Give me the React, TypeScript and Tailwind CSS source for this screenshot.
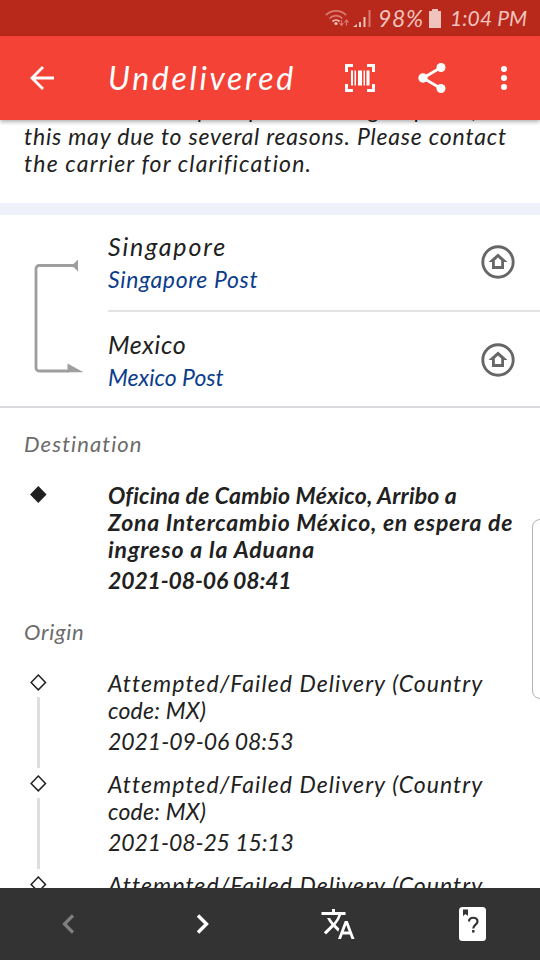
import type { ReactNode } from 'react';

interface Stop {
  country: string;
  carrier: string;
  countryClass: string;
  carrierClass: string;
}

interface TrackEvent {
  date: string;
  dateClass: string;
}

const stops: Stop[] = [
  { country: 'Singapore', carrier: 'Singapore Post', countryClass: 'tracking-[1.85px]', carrierClass: 'tracking-[0.65px]' },
  { country: 'Mexico', carrier: 'Mexico Post', countryClass: 'tracking-[0.6px]', carrierClass: 'tracking-[0px]' },
];

const originEvents: TrackEvent[] = [
  { date: '2021-09-06 08:53', dateClass: 'tracking-[-0.05px]' },
  { date: '2021-08-25 15:13', dateClass: 'tracking-[-0.1px]' },
  { date: '2021-08-18 11:42', dateClass: 'tracking-[-0.05px]' },
];

function StatusBar() {
  return (
    <div className="flex h-9 items-center bg-[#b8291b] text-[#f1c3bf]">
      <svg className="ml-[325px] h-7 w-12 shrink-0" viewBox="0 0 48 28" fill="none">
        <g stroke="#d9796f" strokeWidth="1.8">
          <path d="M1 11a14 14 0 0 1 20 0" />
          <path d="M4.5 14.5a9 9 0 0 1 13 0" />
        </g>
        <path d="M7.5 17.5a5 5 0 0 1 7 0" stroke="#f1c3bf" strokeWidth="1.8" />
        <circle cx="11" cy="19.5" r="1.6" fill="#f1c3bf" />
        <path d="M16.5 16v5M14.5 19l2 2.5 2-2.5M21.5 21.5v-5M19.5 18.5l2-2.5 2 2.5" stroke="#d9796f" strokeWidth="1.2" />
        <path d="M28 23l4-3v3zM34 18h2v5h-2zM38.5 13h2v10h-2z" fill="#f1c3bf" />
        <path d="M43.5 6h2v17h-2z" fill="#d9796f" />
      </svg>
      <span className="ml-[5px] w-[51px] whitespace-nowrap text-[23px] tracking-[0.6px]">98%</span>
      <svg className="h-[19px] w-3 shrink-0" viewBox="0 0 12 19" fill="currentColor">
        <path d="M3 0h6v2h3v17H0V2h3z" />
      </svg>
      <span className="ml-[9px] whitespace-nowrap text-[21px] tracking-[0.1px]">1:04 PM</span>
    </div>
  );
}

function AppBar() {
  return (
    <header className="relative z-10 flex h-21 items-center bg-[#f44336] text-white shadow-[0_2px_4px_rgba(0,0,0,0.3)]">
      <svg className="ml-[30px] h-6 w-6 shrink-0" viewBox="0 0 24 24" fill="none" stroke="currentColor" strokeWidth="2.8">
        <path d="M24 12H2M13 1L2 12l11 11" />
      </svg>
      <h1 className="ml-[54px] w-[237px] whitespace-nowrap text-[32px] tracking-[2.7px]">Undelivered</h1>
      <svg className="h-7 w-[30px] shrink-0" viewBox="0 0 30 28" fill="currentColor">
        <path d="M0 0h8v3H3v5H0zM22 0h8v8h-3V3h-5zM0 20h3v5h5v3H0zM27 20h3v8h-8v-3h5z" />
        <path d="M6 6.500h2v15H6zM9.500 6.500h1.500v15H9.500zM13 6.500h4v15h-4zM18.500 6.500h1.500v15h-1.500zM21.500 6.500h3v15h-3z" />
      </svg>
      <svg className="ml-[43px] h-[30px] w-7 shrink-0" viewBox="0 0 28 30" fill="currentColor">
        <path d="M23 4.500L5 15l18 10.500" fill="none" stroke="currentColor" strokeWidth="2.8" />
        <circle cx="23" cy="4.5" r="4.5" />
        <circle cx="5" cy="15" r="4.7" />
        <circle cx="23" cy="25.5" r="4.5" />
      </svg>
      <svg className="ml-[55px] h-[26px] w-[6px] shrink-0" viewBox="0 0 6 26" fill="currentColor">
        <circle cx="3" cy="4" r="3" />
        <circle cx="3" cy="13" r="3" />
        <circle cx="3" cy="22" r="3" />
      </svg>
    </header>
  );
}

function HomeBadge() {
  return (
    <svg className="mr-[25px] mb-[2px] h-[34px] w-[34px] shrink-0" viewBox="0 0 34 34" fill="none">
      <circle cx="17" cy="17" r="15.2" stroke="#666" strokeWidth="2.9" />
      <path d="M17 8.500L7.500 17H11v7h12v-7h3.500zM17 12.500l3.200 3V21h-6.400v-5.500z" fill="#666" fillRule="evenodd" />
    </svg>
  );
}

function Route() {
  return (
    <section className="flex h-[193px] border-b-2 border-[#d9d9de]">
      <svg className="ml-[34px] mt-[43px] h-[118px] w-[50px] shrink-0" viewBox="0 0 50 118">
        <path d="M41 7.500H5a3 3 0 0 0-3 3V110a3 3 0 0 0 3 3h30" fill="none" stroke="#9e9e9e" strokeWidth="2.8" />
        <path d="M44 1.500v12l-5-5v-2zM33.500 105.500L49.500 114.300h-16z" fill="#9e9e9e" />
      </svg>
      <div className="ml-6 flex-1">
        {stops.map((stop, i) => (
          <div key={stop.country} className={i === 0 ? 'flex h-[97px] items-center border-b-2 border-[#e3e3e3]' : 'flex h-[97px] items-center'}>
            <div className="flex-1 whitespace-nowrap">
              <p className={`text-[25px] leading-[33px] ${stop.countryClass}`}>{stop.country}</p>
              <p className={`text-[23px] leading-[33px] text-[#0b3d8c] ${stop.carrierClass}`}>{stop.carrier}</p>
            </div>
            <HomeBadge />
          </div>
        ))}
      </div>
    </section>
  );
}

function Diamond({ filled }: { filled?: boolean }) {
  return (
    <svg className="h-[18px] w-[18px] shrink-0" viewBox="0 0 18 18">
      <path d="M9.300 2L16.500 9.400 9.300 16.800 2.100 9.400z" fill={filled ? '#212121' : 'none'} stroke="#212121" strokeWidth="1.5" />
    </svg>
  );
}

function TimelineRow({ latest, children }: { latest?: boolean; children: ReactNode }) {
  return (
    <div className="flex">
      <div className="ml-[29px] flex w-[18px] flex-col items-center">
        <Diamond filled={latest} />
        {!latest && <div className="mt-[6px] h-[71px] w-[3px] bg-[#dedede]" />}
      </div>
      <div className="-mt-[3px] ml-[61px] whitespace-nowrap text-[23px] leading-[27px]">{children}</div>
    </div>
  );
}

function BottomBar() {
  return (
    <nav className="grid h-18 shrink-0 grid-cols-4 place-items-center bg-[#333] text-white">
      <svg className="h-5 w-3" viewBox="0 0 12 20" fill="none" stroke="#808080" strokeWidth="3.2">
        <path d="M11 1.500L2.500 10l8.500 8.500" />
      </svg>
      <svg className="ml-px h-5 w-3" viewBox="0 0 12 20" fill="none" stroke="currentColor" strokeWidth="3.4">
        <path d="M1 1.500L9.500 10 1 18.500" />
      </svg>
      <svg className="h-9 w-9" viewBox="0 0 24 24" fill="currentColor">
        <path d="M12.870 15.070l-2.540-2.510.03-.03A17.520 17.520 0 0 0 14.070 6H17V4h-7V2H8v2H1v2h11.170C11.500 7.920 10.440 9.750 9 11.350 8.070 10.320 7.300 9.190 6.690 8h-2c.73 1.630 1.730 3.170 2.980 4.560l-5.090 5.020L4 19l5-5 3.110 3.110.76-2.040zM18.500 10h-2L12 22h2l1.120-3h4.750L21 22h2l-4.500-12zm-2.620 7l1.620-4.330L19.120 17h-3.240z" />
      </svg>
      <svg className="h-[34px] w-[27px]" viewBox="0 0 27 34">
        <rect width="27" height="34" rx="3.5" fill="white" />
        <path d="M4 2.500h5v6.500L6.500 7 4 9z" fill="#333" />
        <path d="M10 14.500c0-5 8.500-5 8.500 0 0 3-4.200 3.200-4.200 7" fill="none" stroke="#333" strokeWidth="2.2" />
        <path d="M13.100 23h2.400v2.600h-2.400z" fill="#333" />
      </svg>
    </nav>
  );
}

export default function App() {
  return (
    <div className="relative flex h-[960px] w-[540px] flex-col overflow-hidden bg-white font-['Lato',sans-serif] text-[#212121] italic">
      <StatusBar />
      <AppBar />
      <main className="min-h-0 flex-1 overflow-hidden">
        <div className="-mt-[24px] h-[107px] whitespace-nowrap pl-6 text-[23px] leading-[27px]">
          <p className="tracking-[0.55px]">The carrier attempted parcel during dispatch,</p>
          <p className="tracking-[0.8px]">this may due to several reasons. Please contact</p>
          <p className="tracking-[1.15px]">the carrier for clarification.</p>
        </div>
        <div className="h-3 bg-[#eff2fb]" />
        <Route />
        <h2 className="mt-[22px] pl-6 text-[22px] leading-[27px] tracking-[1.1px] text-[#6b6b6b]">Destination</h2>
        <div className="mt-[28px] font-bold">
          <TimelineRow latest>
            <p className="tracking-[0.2px]">Oficina de Cambio México, Arribo a</p>
            <p className="tracking-[0.76px]">Zona Intercambio México, en espera de</p>
            <p className="tracking-[0.9px]">ingreso a la Aduana</p>
            <p className="mt-[4px] tracking-[-0.15px]">2021-08-06 08:41</p>
          </TimelineRow>
        </div>
        <h2 className="mt-[24px] pl-6 text-[22px] leading-[27px] tracking-[0.7px] text-[#6b6b6b]">Origin</h2>
        <div className="mt-[28px] flex flex-col gap-[6px]">
          {originEvents.map((event) => (
            <TimelineRow key={event.date}>
              <p className="tracking-[1.06px]">Attempted/Failed Delivery (Country</p>
              <p className="tracking-[0.2px]">code: MX)</p>
              <p className={`mt-[4px] ${event.dateClass}`}>{event.date}</p>
            </TimelineRow>
          ))}
        </div>
      </main>
      <BottomBar />
      {/* edge panel handle, runs off the right side */}
      <div className="absolute top-[519px] -right-[4px] h-[180px] w-[12px] rounded-l-lg border border-[#b5b5b5] bg-white" />
    </div>
  );
}
